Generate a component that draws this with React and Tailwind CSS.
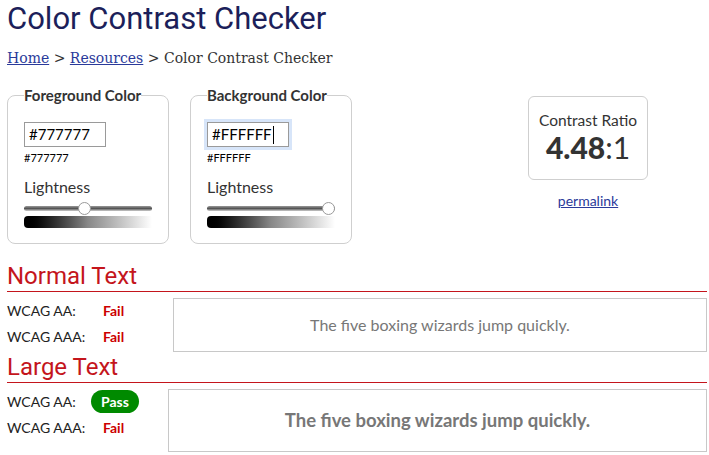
import React from 'react';

const body = { fontFamily: 'Lato, "Open Sans", sans-serif' };

function Slider({ pct }) {
  return (
    <div className="relative mt-[6px] h-[12px]">
      <div className="absolute left-0 right-0 top-[4px] h-[5px] rounded-full bg-gradient-to-b from-[#9a9a9a] via-[#555] to-[#d0d0d0]" />
      <div
        className="absolute top-0 h-[13px] w-[13px] rounded-full border border-[#9a9a9a] bg-white"
        style={{ left: `calc(${pct}% - ${pct * 0.13}px)` }}
      />
    </div>
  );
}

function ColorField({ label, value, focused, pct }) {
  return (
    <fieldset className="w-[162px] rounded-[8px] border border-[#cfcfcf] px-[16px] pb-[15px]">
      <legend className="px-0 text-[15px] font-bold leading-[20px] text-[#333]">{label}</legend>
      <div
        className={
          'mt-[17px] flex h-[25px] w-[82px] items-center border border-[#9a9a9a] bg-white px-[4px] text-[15px] text-black ' +
          (focused ? 'outline-3 outline-[#d7e5f9]' : '')
        }
      >
        <span>{value}</span>
        {focused && <span className="ml-px h-[18px] w-px bg-black" />}
      </div>
      <div className="mt-[4px] text-[11px] leading-[14px] text-black">{value}</div>
      <div className="mt-[13px] text-[16px] leading-[18px] text-[#333]">Lightness</div>
      <Slider pct={pct} />
      <div className="mt-[2px] h-[12px] rounded-l-[4px] bg-gradient-to-r from-black via-[#888] to-white" />
    </fieldset>
  );
}

function Status({ pass }) {
  return pass ? (
    <span className="inline-block rounded-full bg-[#008a00] px-[10px] text-[14px] font-bold leading-[23px] text-white">
      Pass
    </span>
  ) : (
    <span className="inline-block px-[12px] text-[14px] font-bold leading-[23px] text-[#c00]">Fail</span>
  );
}

function Section({ title, aa, aaa, leftW, boxH, large }) {
  return (
    <section>
      <h2
        className="border-b border-[#c4151c] pb-[2px] text-[24px] leading-[26px] text-[#c4151c]"
        style={{ fontFamily: 'Roboto, sans-serif' }}
      >
        {title}
      </h2>
      <div className="mt-[6px] flex">
        <div style={{ width: leftW }}>
          <div className="flex h-[24px] items-center">
            <span className="w-[84px] text-[14px] text-[#222]">WCAG AA:</span>
            <Status pass={aa} />
          </div>
          <div className="flex h-[28px] items-center">
            <span className="w-[84px] text-[14px] text-[#222]">WCAG AAA:</span>
            <Status pass={aaa} />
          </div>
        </div>
        <div
          className={
            'flex flex-1 items-center justify-center border border-[#c8c8c8] text-[#777] ' +
            (large ? 'text-[18.5px] font-bold' : 'text-[16px]')
          }
          style={{ height: boxH }}
        >
          The five boxing wizards jump quickly.
        </div>
      </div>
    </section>
  );
}

export default function App() {
  return (
    <div className="min-h-screen bg-white px-[7px] pr-[2px]" style={body}>
      <h1
        className="pt-[1px] text-[31px] leading-[36px] text-[#1c1f5a]"
        style={{ fontFamily: 'Roboto, sans-serif' }}
      >
        Color Contrast Checker
      </h1>
      <nav
        className="mt-[11px] text-[14px] leading-[20px] text-[#333]"
        style={{ fontFamily: '"DejaVu Serif", serif' }}
      >
        <a href="#" className="text-[#2a3a9a] underline">Home</a> &gt;{' '}
        <a href="#" className="text-[#2a3a9a] underline">Resources</a> &gt; Color Contrast Checker
      </nav>

      <div className="mt-[17px] flex items-start">
        <ColorField label="Foreground Color" value="#777777" pct={46.7} />
        <div className="ml-[21px]">
          <ColorField label="Background Color" value="#FFFFFF" focused pct={100} />
        </div>
        <div className="ml-[176px] mt-[11px] flex flex-col items-center">
          <div className="flex h-[84px] w-[120px] flex-col items-center justify-center rounded-[6px] border border-[#cfcfcf] text-[#333]">
            <div className="text-[15.5px] leading-[18px]">Contrast Ratio</div>
            <div className="text-[30px] leading-[36px]">
              <span className="font-black">4.48</span>:1
            </div>
          </div>
          <a href="#" className="mt-[10px] text-[14px] text-[#2a3a9a] underline">permalink</a>
        </div>
      </div>

      <div className="mt-[19px]">
        <Section title="Normal Text" aa={false} aaa={false} leftW={166} boxH={54} />
      </div>
      <div className="mt-[2px]">
        <Section title="Large Text" aa aaa={false} leftW={161} boxH={63} large />
      </div>
    </div>
  );
}
